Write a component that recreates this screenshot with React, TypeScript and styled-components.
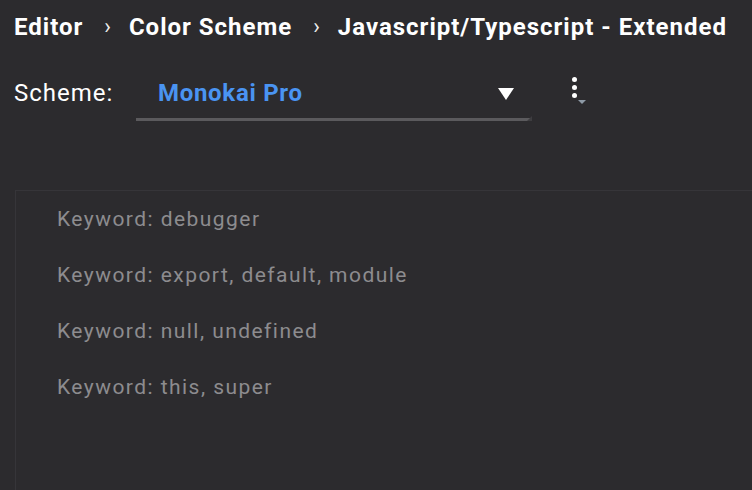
import React from "react";
import styled, { createGlobalStyle } from "styled-components";

const GlobalStyle = createGlobalStyle`
  html, body {
    margin: 0;
    padding: 0;
    background: #2c2b2e;
    font-family: Roboto, "Liberation Sans", sans-serif;
    overflow: hidden;
  }
`;

const Page = styled.div`
  width: 752px;
  height: 490px;
  background: #2c2b2e;
  display: flex;
  flex-direction: column;
  box-sizing: border-box;
  padding-left: 14px;
`;

const Breadcrumb = styled.div`
  display: flex;
  align-items: center;
  height: 54px;
  color: #ffffff;
  font-size: 24px;
  font-weight: 700;
  letter-spacing: 1px;
`;

const Crumb = styled.span`
  white-space: nowrap;
`;

const Chevron = styled.span`
  font-size: 22px;
  font-weight: 400;
  margin: 0 17px 2px 21px;
  color: #ececec;
`;

const SchemeRow = styled.div`
  display: flex;
  align-items: center;
  height: 68px;
  margin-top: 5px;
`;

const Label = styled.span`
  color: #ffffff;
  font-size: 24px;
  letter-spacing: 1px;
  width: 122px;
`;

const Select = styled.div`
  position: relative;
  align-self: flex-start;
  width: 396px;
  height: 62px;
  box-sizing: border-box;
  display: flex;
  align-items: flex-start;
  justify-content: space-between;
  padding: 20px 18px 0 22px;
  border-bottom: 3px solid #5b5a5d;
`;

const ValueLine = styled.div`
  flex: 1;
  height: 28px;
  display: flex;
  align-items: center;
  justify-content: space-between;
`;

const Grip = styled.span`
  position: absolute;
  right: 0;
  bottom: -3px;
  width: 0;
  height: 0;
  border-left: 5px solid transparent;
  border-bottom: 5px solid #3e3d40;
`;

const SelectValue = styled.span`
  color: #4a94f2;
  font-size: 24px;
  font-weight: 700;
  letter-spacing: 0.7px;
`;

const Caret = styled.span`
  width: 0;
  height: 0;
  margin-top: 2px;
  border-left: 8px solid transparent;
  border-right: 8px solid transparent;
  border-top: 12px solid #ffffff;
`;

const MoreButton = styled.div`
  position: relative;
  align-self: flex-start;
  margin: 18px 0 0 36px;
  width: 20px;
  height: 21px;
  display: flex;
  flex-direction: column;
  align-items: flex-start;
  gap: 3px;
  padding-left: 4px;
`;

const Dot = styled.span`
  width: 5px;
  height: 5px;
  border-radius: 50%;
  background: #ffffff;
`;

const MoreCaret = styled.span`
  position: absolute;
  left: 10px;
  bottom: -6px;
  width: 0;
  height: 0;
  border-left: 4px solid transparent;
  border-right: 4px solid transparent;
  border-top: 4px solid #8e9aa6;
`;

const Panel = styled.div`
  margin-top: 63px;
  margin-left: 1px;
  flex: 1;
  border-top: 1px solid #363539;
  border-left: 1px solid #363539;
  display: flex;
  flex-direction: column;
  padding-left: 41px;
`;

const Item = styled.div`
  height: 56px;
  display: flex;
  align-items: center;
  color: #8d8c8f;
  font-size: 21px;
  letter-spacing: 1.45px;
`;

const items = [
  "Keyword: debugger",
  "Keyword: export, default, module",
  "Keyword: null, undefined",
  "Keyword: this, super",
];

export default function App() {
  return (
    <>
      <GlobalStyle />
      <Page>
        <Breadcrumb>
          <Crumb>Editor</Crumb>
          <Chevron>›</Chevron>
          <Crumb>Color Scheme</Crumb>
          <Chevron>›</Chevron>
          <Crumb>Javascript/Typescript - Extended</Crumb>
        </Breadcrumb>
        <SchemeRow>
          <Label>Scheme:</Label>
          <Select>
            <ValueLine>
              <SelectValue>Monokai Pro</SelectValue>
              <Caret />
            </ValueLine>
            <Grip />
          </Select>
          <MoreButton>
            <Dot />
            <Dot />
            <Dot />
            <MoreCaret />
          </MoreButton>
        </SchemeRow>
        <Panel>
          {items.map((t) => (
            <Item key={t}>{t}</Item>
          ))}
        </Panel>
      </Page>
    </>
  );
}
